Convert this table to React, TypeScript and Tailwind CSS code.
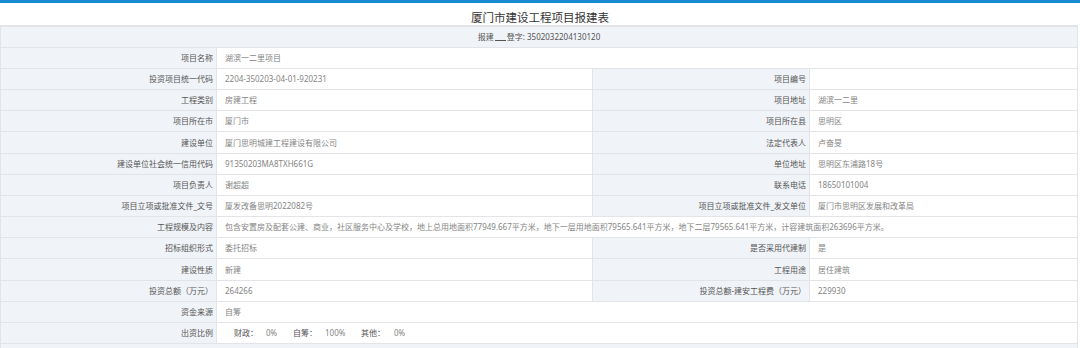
const font = "font-['Noto_Sans','Noto_Sans_CJK_SC',sans-serif]";

type Row =
  | { kind: "pair"; l1: string; v1: string; l2: string; v2: string }
  | { kind: "wide"; l1: string; v1: React.ReactNode };

const rows: Row[] = [
  { kind: "wide", l1: "项目名称", v1: "湖滨一二里项目" },
  { kind: "pair", l1: "投资项目统一代码", v1: "2204-350203-04-01-920231", l2: "项目编号", v2: "" },
  { kind: "pair", l1: "工程类别", v1: "房建工程", l2: "项目地址", v2: "湖滨一二里" },
  { kind: "pair", l1: "项目所在市", v1: "厦门市", l2: "项目所在县", v2: "思明区" },
  { kind: "pair", l1: "建设单位", v1: "厦门思明城建工程建设有限公司", l2: "法定代表人", v2: "卢奋旻" },
  { kind: "pair", l1: "建设单位社会统一信用代码", v1: "91350203MA8TXH661G", l2: "单位地址", v2: "思明区东浦路18号" },
  { kind: "pair", l1: "项目负责人", v1: "谢超超", l2: "联系电话", v2: "18650101004" },
  {
    kind: "pair",
    l1: "项目立项或批准文件_文号",
    v1: "厦发改备思明2022082号",
    l2: "项目立项或批准文件_发文单位",
    v2: "厦门市思明区发展和改革局",
  },
  {
    kind: "wide",
    l1: "工程规模及内容",
    v1: "包含安置房及配套公建、商业，社区服务中心及学校，地上总用地面积77949.667平方米，地下一层用地面积79565.641平方米，地下二层79565.641平方米，计容建筑面积263696平方米。",
  },
  { kind: "pair", l1: "招标组织形式", v1: "委托招标", l2: "是否采用代建制", v2: "是" },
  { kind: "pair", l1: "建设性质", v1: "新建", l2: "工程用途", v2: "居住建筑" },
  { kind: "pair", l1: "投资总额（万元）", v1: "264266", l2: "投资总额-建安工程费（万元）", v2: "229930" },
  { kind: "wide", l1: "资金来源", v1: "自筹" },
  {
    kind: "wide",
    l1: "出资比例",
    v1: (
      <span className="flex pl-[9px]">
        <span className="w-[32px] text-[#555]">财政：</span>
        <span className="w-[27px]">0%</span>
        <span className="w-[32px] text-[#555]">自筹：</span>
        <span className="w-[36px]">100%</span>
        <span className="w-[33px] text-[#555]">其他：</span>
        <span>0%</span>
      </span>
    ),
  },
];

function Label({ children }: { children: React.ReactNode }) {
  return (
    <div className="flex items-center justify-end border-r border-[#e2e4e8] bg-[#f0f3f8] pr-[3px] text-[#555]">
      {children}
    </div>
  );
}

function Value({ children, wide }: { children: React.ReactNode; wide?: boolean }) {
  return (
    <div
      className={`flex items-center whitespace-nowrap bg-white pl-[8px] text-[#858585] ${
        wide ? "col-span-3" : "border-r border-[#e2e4e8]"
      }`}
    >
      {children}
    </div>
  );
}

export default function App() {
  return (
    <div className={`h-[348px] w-[1080px] overflow-hidden bg-white ${font}`}>
      <div className="h-[3px] bg-[#1a8bd3]" />
      <div className="flex h-[22px] items-center justify-center pt-[7px] text-[11.5px] text-[#333]">
        厦门市建设工程项目报建表
      </div>
      <div className="w-[1078px] border-x border-t-2 border-[#e2e4e8] text-[8px]">
        <div className="flex h-[21px] items-center justify-center border-b border-[#e2e4e8] bg-[#f0f3f8] text-[#555]">
          报建<span className="mx-[1px] inline-block h-[7px] w-[11px] border-b border-[#555]" />登字: 3502032204130120
        </div>
        {rows.map((r, i) => (
          <div
            key={r.l1}
            className={`grid grid-cols-[216px_376px_217px_267px] border-b border-[#e2e4e8] ${
              i === 4 || i === 10 ? "h-[22px]" : "h-[21px]"
            }`}
          >
            <Label>{r.l1}</Label>
            {r.kind === "wide" ? (
              <Value wide>{r.v1}</Value>
            ) : (
              <>
                <Value>{r.v1}</Value>
                <Label>{r.l2}</Label>
                <div className="flex items-center bg-white pl-[8px] text-[#858585]">{r.v2}</div>
              </>
            )}
          </div>
        ))}
        <div className="h-[21px] bg-[#f0f3f8]" />
      </div>
    </div>
  );
}
